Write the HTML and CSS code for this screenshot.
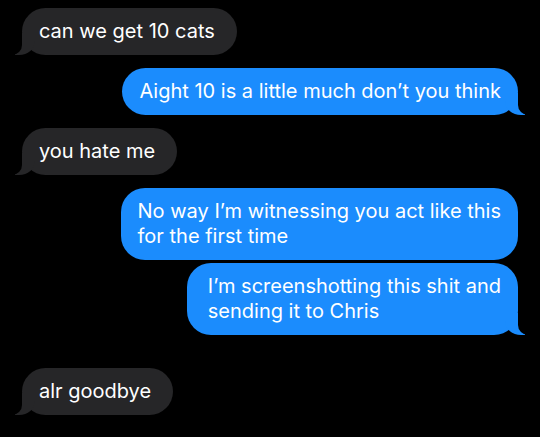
FILE: index.html
```html
<!DOCTYPE html>
<html lang="en">
<head>
    <meta charset="UTF-8">
    <meta name="viewport" content="width=device-width, initial-scale=1.0">
    <title>Messages</title>
    <link rel="stylesheet" href="styles.css">
</head>
<body>
    <div id="thread">
        <div class="message them tail">can we get 10 cats</div>
        <div class="message me tail">Aight 10 is a little much don’t you think</div>
        <div class="message them tail">you hate me</div>
        <div class="message me">No way I’m witnessing you act like this<br>for the first time</div>
        <div class="message me tail grouped">I’m screenshotting this shit and<br>sending it to Chris</div>
        <div class="message them tail last">alr goodbye</div>
    </div>
</body>
</html>
```

FILE: styles.css
```css
body {
    margin: 0;
    padding: 0;
    background-color: #000;
    font-family: Inter, "Noto Sans", sans-serif;
    height: 437px;
    overflow: hidden;
}
#thread {
    display: flex;
    flex-direction: column;
    align-items: flex-start;
    padding: 8px 22px 0 22px;
}
.message {
    position: relative;
    padding: 11px 17px;
    border-radius: 24px;
    font-size: 20px;
    line-height: 25px;
    color: #fff;
    margin-bottom: 13px;
    white-space: nowrap;
}
.them {
    background-color: #262628;
    padding-right: 22px; /* extra room on the short grey bubbles */
}
.me {
    align-self: flex-end;
    background-color: #1b8cfd;
}
.grouped {
    margin-top: -10px;
    padding-left: 21px;
}
.last {
    margin-top: 20px;
}
/* bubble tails */
.tail::before,
.tail::after {
    content: "";
    position: absolute;
    bottom: 0;
    height: 22px;
}
.them.tail::before {
    left: -7px;
    width: 20px;
    background-color: #262628;
    border-bottom-right-radius: 16px 14px;
}
.them.tail::after {
    left: -10px;
    width: 10px;
    background-color: #000;
    border-bottom-right-radius: 10px;
}
.me.tail::before {
    right: -7px;
    width: 20px;
    background-color: #1b8cfd;
    border-bottom-left-radius: 16px 14px;
}
.me.tail::after {
    right: -10px;
    width: 10px;
    background-color: #000;
    border-bottom-left-radius: 10px;
}
```
